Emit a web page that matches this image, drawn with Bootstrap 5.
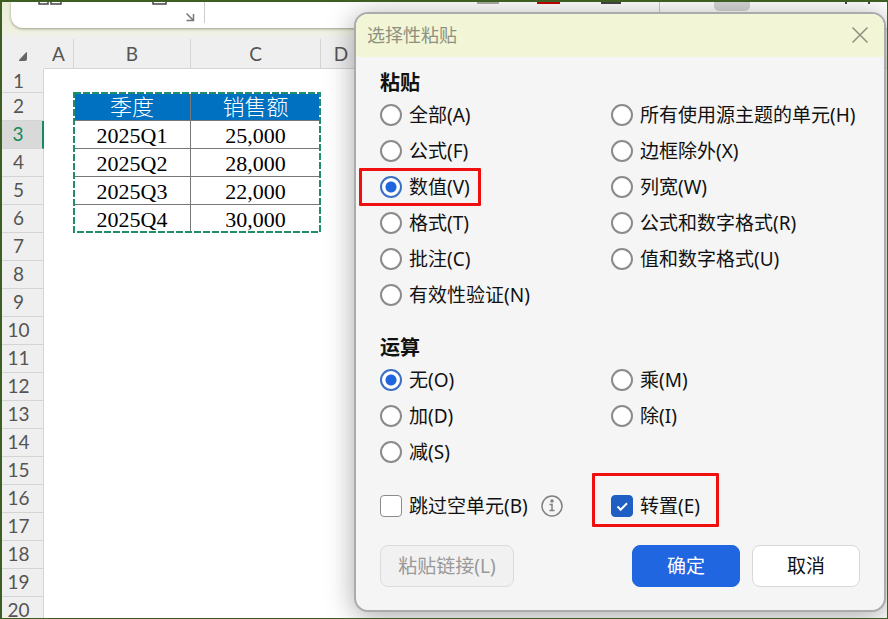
<!DOCTYPE html>
<html lang="zh-CN">
<head>
<meta charset="utf-8">
<meta name="viewport" content="width=device-width, initial-scale=1">
<title>选择性粘贴</title>
<link rel="stylesheet" href="https://cdn.jsdelivr.net/npm/bootstrap@5.3.0/dist/css/bootstrap.min.css">
<style>
body { font-family: "Noto Sans", "Noto Sans CJK SC", sans-serif; font-size: 19px; line-height: 24px; color: #111; }
.app-frame { border: 2px solid #3d5e22; border-right-width: 1px; border-bottom-width: 1px; background: #fff; }
.ribbon-zone { background: linear-gradient(#e9eed6, #f0f1e0 75%, #efefef); padding: 0 0 11px 9px; }
.ribbon-panel { height: 26px; background: #fff; border-bottom-left-radius: 12px; box-shadow: 0 1px 3px #999c84; }
.ribbon-panel svg { display: block; }
.sheet { table-layout: fixed; width: 100%; border-collapse: separate; border-spacing: 0; }
.sheet th { background: #efefef; color: #555; font-family: Lato, sans-serif; font-size: 19px; font-weight: 400; text-align: center; padding: 0; }
.sheet thead th { height: 30px; border-right: 1px solid #d4d4d4; border-bottom: 1px solid #d4d4d4; line-height: 29px; }
.sheet thead th:first-child, .sheet thead th:last-child { border-right: 0; }
.sheet thead th:first-child { border-bottom: 0; }
.sheet tbody th { height: 28px; line-height: 25px; vertical-align: top; border-right: 1px solid #d4d4d4; border-bottom: 1px solid #d4d4d4; padding-right: 8px; }
.sheet tbody tr:first-child th, .sheet tbody tr:first-child td { height: 24px; line-height: 23px; }
.sheet tbody th.current { background: #d9d9d9; color: #158a60; border-right: 2px solid #158a60; }
.sheet td { padding: 0; height: 28px; line-height: 25px; text-align: center; }
.sheet td.cell { padding-top: 2px; border-right: 1px solid #777; border-bottom: 1px solid #777; font-family: "Liberation Serif", "Noto Sans CJK SC", serif; font-size: 22px; color: #000; }
.sheet td.cell-head { background: #0070c0; color: #fff; font-weight: 300; }
.col-num { width: 42px; } .col-a { width: 30px; } .col-b { width: 117px; } .col-c { width: 130px; }
.ants { left: -1px; top: -1px; z-index: 1; }
.dlg { top: 10px; right: 1px; width: 532px; max-width: calc(100% - 4px); background: #f5f5f5; border: 2px solid #a9abad; border-radius: 14px; box-shadow: 0 4px 28px rgba(0,0,0,.35); z-index: 5; }
.dlg-title { height: 43px; background: #f2f6d6; border-radius: 12px 12px 0 0; color: #8e907f; font-size: 18px; padding: 0 16px 2px 11px; }
.dlg-close { background: none; border: 0; padding: 0; line-height: 0; }
.dlg-body { padding: 14px 24px 23px; }
.group-title { font-size: 20px; font-weight: 700; line-height: 24px; margin: 0 0 2px; }
.group-title-next { margin-top: 23px; }
.options { display: grid; grid-template-columns: 231px 1fr; grid-auto-rows: 36px; align-items: center; }
.opt { display: flex; align-items: center; gap: 7px; position: relative; white-space: nowrap; }
.opt input { appearance: none; flex: none; width: 22px; height: 22px; margin: 0; background: #fff; border: 2px solid #8b8b8b; }
.opt input[type=radio] { border-radius: 50%; }
.opt input[type=radio]:checked { border-color: #3b6fc4; background: radial-gradient(circle, #1f66de 5px, #fff 6px); }
.opt input[type=checkbox] { border: 1px solid #8b8b8b; border-radius: 4px; }
.opt input[type=checkbox]:checked { border-color: #1f5fc4; background: #1f5fc4 url("data:image/svg+xml,%3Csvg xmlns='http://www.w3.org/2000/svg' viewBox='0 0 20 20'%3E%3Cpath d='M5.5 10.5l3.2 3.2 6.3-6.5' fill='none' stroke='%23fff' stroke-width='2'/%3E%3C/svg%3E") center/20px no-repeat; }
.callout { position: absolute; border: 3px solid #f00f0f; border-radius: 1px; pointer-events: none; }
.callout-value { left: -21px; top: -7px; width: 122px; height: 38px; }
.callout-transpose { left: -19px; top: -21px; width: 127px; height: 54px; }
.extras { margin-top: 18px; }
.actions { margin-top: 21px; gap: 12px; }
.dlg-btn { height: 42px; padding: 0; font-size: 19px; border-radius: 8px; width: 108px; }
.dlg-btn-link { width: 134px; }
.btn-ok, .btn-ok:hover { background: #1f66e0; color: #fff; border-color: #1f66e0; }
.btn-no { background: #fff; color: #111; border-color: #d8d8d8; }
.dlg-btn-link:disabled { background: #f1f1f1; color: #999; border-color: #dcdcdc; opacity: 1; }
</style>
<script src="https://cdn.jsdelivr.net/npm/bootstrap@5.3.0/dist/js/bootstrap.bundle.min.js"></script>
</head>
<body>
<div class="app-frame vh-100 overflow-hidden position-relative">
  <div class="ribbon-zone">
    <div class="ribbon-panel overflow-hidden">
      <svg width="880" height="26" fill="none" aria-hidden="true">
        <path d="M28 0v2h9V0M40 0v2h10V0M142 0v2h13V0" stroke="#444" stroke-width="1.5"/>
        <path d="M175.500 11.500l7 7M182.500 12v6.500h-7" stroke="#777" stroke-width="1.500"/>
        <path d="M193.500 0v21M648.500 0v21" stroke="#ccc"/>
        <path d="M466 1h22" stroke="#a9aca0" stroke-width="2"/><path d="M526 1h23" stroke="#c00000" stroke-width="2"/><path d="M590 1h20" stroke="#444" stroke-width="2"/>
        <rect x="703" y="-10" width="36" height="19" rx="5" fill="#d6d6d6"/>
        <path d="M835 0v2M858 0v2" stroke="#444" stroke-width="2"/>
      </svg>
    </div>
  </div>
  <table class="sheet">
    <colgroup><col class="col-num"><col class="col-a"><col class="col-b"><col class="col-c"><col></colgroup>
    <thead>
      <tr><th aria-label="全选"><svg width="10" height="10" aria-hidden="true"><path d="M9 0v7q0 2-2 2H2Q0 9 1.500 7.500L7.500 1Q8.500 0 9 0z" fill="#666"/></svg></th><th>A</th><th>B</th><th>C</th><th class="text-start ps-2">&nbsp;D</th></tr>
    </thead>
    <tbody>
      <tr><th>1</th><td colspan="4"></td></tr>
      <tr><th>2</th><td></td><td class="cell cell-head position-relative">季度
        <svg class="ants position-absolute" width="249" height="142" fill="none" aria-hidden="true"><rect x="1" y="1" width="246" height="139" stroke="#fff" stroke-width="2"/><rect x="1" y="1" width="246" height="139" stroke="#1f8f68" stroke-width="2" stroke-dasharray="7 2"/></svg></td><td class="cell cell-head">销售额</td><td></td></tr>
      <tr><th class="current">3</th><td></td><td class="cell">2025Q1</td><td class="cell">25,000</td><td></td></tr>
      <tr><th>4</th><td></td><td class="cell">2025Q2</td><td class="cell">28,000</td><td></td></tr>
      <tr><th>5</th><td></td><td class="cell">2025Q3</td><td class="cell">22,000</td><td></td></tr>
      <tr><th>6</th><td></td><td class="cell">2025Q4</td><td class="cell">30,000</td><td></td></tr>
      <tr><th>7</th><td colspan="4"></td></tr>
      <tr><th>8</th><td colspan="4"></td></tr>
      <tr><th>9</th><td colspan="4"></td></tr>
      <tr><th>10</th><td colspan="4"></td></tr>
      <tr><th>11</th><td colspan="4"></td></tr>
      <tr><th>12</th><td colspan="4"></td></tr>
      <tr><th>13</th><td colspan="4"></td></tr>
      <tr><th>14</th><td colspan="4"></td></tr>
      <tr><th>15</th><td colspan="4"></td></tr>
      <tr><th>16</th><td colspan="4"></td></tr>
      <tr><th>17</th><td colspan="4"></td></tr>
      <tr><th>18</th><td colspan="4"></td></tr>
      <tr><th>19</th><td colspan="4"></td></tr>
      <tr><th>20</th><td colspan="4"></td></tr>
    </tbody>
  </table>

  <form class="dlg position-absolute" role="dialog" aria-labelledby="dlg-name">
    <div class="dlg-title d-flex align-items-center justify-content-between">
      <span id="dlg-name">选择性粘贴</span>
      <button type="button" class="dlg-close" aria-label="关闭"><svg width="16" height="16" fill="none" stroke="#8e907f" stroke-width="1.500"><path d="M.5.5l15 15M15.500.5l-15 15"/></svg></button>
    </div>
    <div class="dlg-body">
      <h2 class="group-title">粘贴</h2>
      <div class="options">
        <label class="opt"><input type="radio" name="paste">全部(A)</label>
        <label class="opt"><input type="radio" name="paste">所有使用源主题的单元(H)</label>
        <label class="opt"><input type="radio" name="paste">公式(F)</label>
        <label class="opt"><input type="radio" name="paste">边框除外(X)</label>
        <label class="opt"><input type="radio" name="paste" checked>数值(V)<span class="callout callout-value"></span></label>
        <label class="opt"><input type="radio" name="paste">列宽(W)</label>
        <label class="opt"><input type="radio" name="paste">格式(T)</label>
        <label class="opt"><input type="radio" name="paste">公式和数字格式(R)</label>
        <label class="opt"><input type="radio" name="paste">批注(C)</label>
        <label class="opt"><input type="radio" name="paste">值和数字格式(U)</label>
        <label class="opt"><input type="radio" name="paste">有效性验证(N)</label>
      </div>
      <h2 class="group-title group-title-next">运算</h2>
      <div class="options">
        <label class="opt"><input type="radio" name="op" checked>无(O)</label>
        <label class="opt"><input type="radio" name="op">乘(M)</label>
        <label class="opt"><input type="radio" name="op">加(D)</label>
        <label class="opt"><input type="radio" name="op">除(I)</label>
        <label class="opt"><input type="radio" name="op">减(S)</label>
      </div>
      <div class="options extras">
        <div class="d-flex align-items-center">
          <label class="opt"><input type="checkbox">跳过空单元(B)</label>
          <svg class="ms-auto me-5" width="22" height="22" fill="none" stroke="#808080" stroke-width="1.500" role="img" aria-label="说明"><circle cx="11" cy="11" r="10"/><path d="M8.500 9.500H11v6M8.500 15.500h5"/><circle cx="11" cy="6" r="1" fill="#808080"/></svg>
        </div>
        <label class="opt"><input type="checkbox" checked>转置(E)<span class="callout callout-transpose"></span></label>
      </div>
      <div class="actions d-flex">
        <button type="button" class="btn dlg-btn dlg-btn-link me-auto" disabled>粘贴链接(L)</button>
        <button type="button" class="btn dlg-btn btn-ok">确定</button>
        <button type="button" class="btn dlg-btn btn-no">取消</button>
      </div>
    </div>
  </form>
</div>
</body>
</html>
